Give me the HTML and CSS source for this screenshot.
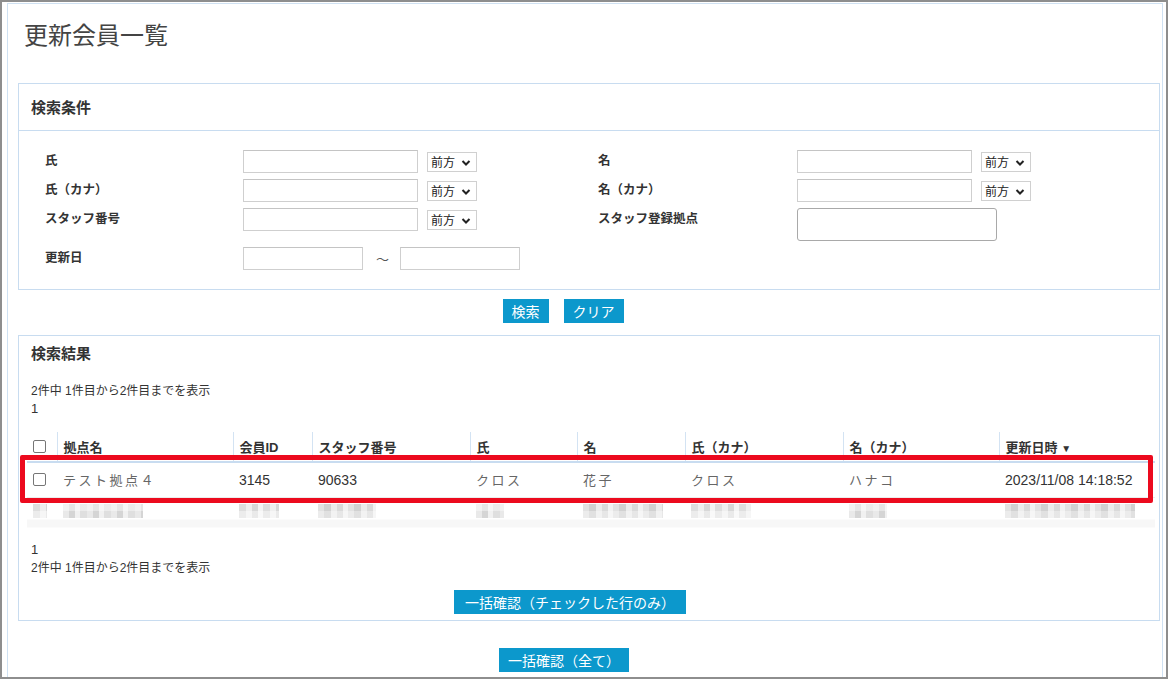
FILE: index.html
```html
<!DOCTYPE html>
<html lang="ja">
<head>
<meta charset="utf-8">
<title>更新会員一覧</title>
<link rel="stylesheet" href="styles.css">
</head>
<body>
<div class="window">
  <div class="page">
    <h1 class="title">更新会員一覧</h1>

    <section class="panel search">
      <div class="panel-head">検索条件</div>
      <div class="form">
        <div class="label">氏</div>
        <div class="field">
          <input class="text" type="text">
          <div class="select"><select><option>前方</option></select><svg viewBox="0 0 10 8" class="chev"><path d="M1.5 2 5 5.5 8.5 2" fill="none" stroke="#222" stroke-width="2"/></svg></div>
        </div>
        <div class="label">名</div>
        <div class="field">
          <input class="text" type="text">
          <div class="select"><select><option>前方</option></select><svg viewBox="0 0 10 8" class="chev"><path d="M1.5 2 5 5.5 8.5 2" fill="none" stroke="#222" stroke-width="2"/></svg></div>
        </div>

        <div class="label">氏（カナ）</div>
        <div class="field">
          <input class="text" type="text">
          <div class="select"><select><option>前方</option></select><svg viewBox="0 0 10 8" class="chev"><path d="M1.5 2 5 5.5 8.5 2" fill="none" stroke="#222" stroke-width="2"/></svg></div>
        </div>
        <div class="label">名（カナ）</div>
        <div class="field">
          <input class="text" type="text">
          <div class="select"><select><option>前方</option></select><svg viewBox="0 0 10 8" class="chev"><path d="M1.5 2 5 5.5 8.5 2" fill="none" stroke="#222" stroke-width="2"/></svg></div>
        </div>

        <div class="label">スタッフ番号</div>
        <div class="field">
          <input class="text" type="text">
          <div class="select"><select><option>前方</option></select><svg viewBox="0 0 10 8" class="chev"><path d="M1.5 2 5 5.5 8.5 2" fill="none" stroke="#222" stroke-width="2"/></svg></div>
        </div>
        <div class="label">スタッフ登録拠点</div>
        <div class="field">
          <input class="text tall" type="text">
        </div>

        <div class="label">更新日</div>
        <div class="field">
          <input class="text date" type="text">
          <span class="tilde">〜</span>
          <input class="text date" type="text">
        </div>
      </div>
    </section>

    <div class="btn-row search-btns">
      <button class="btn btn-short">検索</button>
      <button class="btn">クリア</button>
    </div>

    <section class="panel results">
      <div class="results-head">検索結果</div>
      <p class="info">2件中 1件目から2件目までを表示</p>
      <p class="info num">1</p>

      <div class="table-wrap">
        <table class="list">
          <colgroup>
            <col style="width:30px"><col style="width:176px"><col style="width:79px"><col style="width:158px"><col style="width:107px"><col style="width:108px"><col style="width:158px"><col style="width:156px"><col style="width:156px">
          </colgroup>
          <thead>
            <tr>
              <th class="chk"><span class="box"></span></th>
              <th>拠点名</th>
              <th>会員ID</th>
              <th>スタッフ番号</th>
              <th>氏</th>
              <th>名</th>
              <th>氏（カナ）</th>
              <th>名（カナ）</th>
              <th>更新日時 <span class="sort">▼</span></th>
            </tr>
          </thead>
          <tbody>
            <tr class="row">
              <td class="chk"><span class="box"></span></td>
              <td class="kana">テスト拠点４</td>
              <td class="num-cell">3145</td>
              <td class="num-cell">90633</td>
              <td class="kana">クロス</td>
              <td class="kana">花子</td>
              <td class="kana">クロス</td>
              <td class="kana">ハナコ</td>
              <td class="num-cell">2023/11/08 14:18:52</td>
            </tr>
            <tr class="row masked">
              <td class="chk"><span class="blk b1" style="width:14px"></span></td>
              <td><span class="blk b2" style="width:80px"></span></td>
              <td><span class="blk b1" style="width:40px"></span></td>
              <td><span class="blk b3" style="width:58px"></span></td>
              <td><span class="blk b2" style="width:28px"></span></td>
              <td><span class="blk b3" style="width:80px"></span></td>
              <td><span class="blk b1" style="width:60px"></span></td>
              <td><span class="blk b2" style="width:38px"></span></td>
              <td><span class="blk b3" style="width:130px"></span></td>
            </tr>
          </tbody>
        </table>
        <div class="highlight"></div>
      </div>

      <p class="info num foot-num">1</p>
      <p class="info">2件中 1件目から2件目までを表示</p>

      <div class="btn-row inner-btns">
        <button class="btn btn-wide">一括確認（チェックした行のみ）</button>
      </div>
    </section>

    <div class="btn-row all-btns">
      <button class="btn">一括確認（全て）</button>
    </div>
  </div>
</div>
</body>
</html>
```

FILE: styles.css
```css
* { box-sizing: border-box; }

html, body {
  margin: 0;
  padding: 0;
  background: #fff;
}

body {
  font-family: "Liberation Sans", "Noto Sans CJK JP", sans-serif;
  font-size: 13px;
  color: #333;
}

.window {
  width: 1168px;
  height: 679px;
  border: 2px solid #8e8e8e;
  overflow: hidden;
  background: #fff;
}

.page {
  margin: 1px 3px 0 5px;
  height: 100%;
  border: 1px solid #cfe1f2;
  border-bottom: none;
}

.title {
  margin: 15px 0 30px 16px;
  font-size: 24px;
  line-height: 34px;
  font-weight: normal;
  color: #444;
}

/* panels */
.panel {
  margin: 0 2px 0 10px;
  border: 1px solid #c8dcf0;
  background: #fff;
}

.panel-head {
  height: 47px;
  line-height: 47px;
  padding-left: 12px;
  font-size: 15px;
  font-weight: bold;
  color: #333;
  border-bottom: 1px solid #c8dcf0;
}

/* search form */
.form {
  display: grid;
  grid-template-columns: 198px 355px 199px 1fr;
  row-gap: 6px;
  align-items: start;
  padding: 19px 0 19px 26px;
}

.label {
  line-height: 23px;
  font-weight: bold;
  font-size: 12.5px;
  color: #333;
}

.field {
  display: flex;
  align-items: center;
  height: 23px;
}

.text {
  width: 175px;
  height: 23px;
  border: 1px solid #cfcfcf;
  border-top-color: #c4c4c4;
  padding: 0 4px;
  margin: 0;
  font: inherit;
  background: #fff;
  outline: none;
}

.text.tall {
  width: 200px;
  height: 33px;
  border: 1px solid #a9a9a9;
  border-radius: 3px;
  align-self: flex-start;
}

.field:has(.tall) { height: 33px; }

.text.date { width: 120px; }

.tilde {
  width: 12px;
  margin: 0 12px 0 13px;
  text-align: center;
  font-size: 13px;
  color: #555;
}

.select {
  position: relative;
  margin-left: 9px;
  width: 50px;
  height: 20px;
}

.select select {
  appearance: none;
  -webkit-appearance: none;
  width: 50px;
  height: 20px;
  border: 1px solid #d0d0d0;
  background: #fff;
  padding: 0 0 0 3px;
  font-family: "Noto Sans CJK JP", sans-serif;
  font-size: 12px;
  color: #222;
  outline: none;
  border-radius: 0;
}

.chev {
  position: absolute;
  right: 6px;
  top: 7px;
  width: 10px;
  height: 8px;
  pointer-events: none;
}

/* buttons */
.btn-row {
  display: flex;
  justify-content: center;
  gap: 15px;
}

.btn {
  height: 24px;
  padding: 0 9px;
  border: none;
  background: #0c98cc;
  color: #fff;
  font-family: "Noto Sans CJK JP", sans-serif;
  font-size: 14px;
  line-height: 24px;
  cursor: pointer;
}

.btn-wide { padding: 0 11px; }

.search-btns {
  margin-top: 9px;
  padding-right: 44px;
}

/* results */
.results {
  margin-top: 12px;
  padding: 0 3px 6px 8px;
}

.results-head {
  padding: 8px 0 0 4px;
  line-height: 20px;
  font-size: 15px;
  font-weight: bold;
}

.info {
  margin: 0;
  padding-left: 4px;
  line-height: 18px;
  font-size: 12px;
  color: #333;
}

.results-head + .info { margin-top: 18px; }

.info.num { font-size: 13px; }

.table-wrap {
  position: relative;
  margin-top: 14px;
}

.list {
  width: 1128px;
  border-collapse: collapse;
  table-layout: fixed;
}

.list th {
  height: 30px;
  padding: 0 6px;
  text-align: left;
  font-weight: bold;
  font-size: 13px;
  color: #333;
  border-left: 1px solid #d3e3f3;
  border-bottom: 2px solid #c8dcf0;
  white-space: nowrap;
}

.list th:first-child { border-left: none; }

.sort { font-size: 10px; }

.list td {
  padding: 0 6px;
  white-space: nowrap;
  overflow: hidden;
}

.list .chk { padding: 0 0 0 6px; }

.box {
  display: block;
  width: 13px;
  height: 13px;
  border: 1px solid #767676;
  border-radius: 2px;
  background: #fff;
}

.row td {
  height: 35px;
  border-bottom: 1px solid #ececec;
}

.kana {
  color: #666;
  letter-spacing: 2.5px;
}

.num-cell {
  color: #333;
  font-size: 14px;
}

.row.masked td {
  height: 31px;
  vertical-align: top;
  padding-top: 6px;
  border-bottom: none;
  background: linear-gradient(#fff 0 22px, #f7f7f7 22px);
}

/* pixelated redaction */
.blk {
  display: block;
  height: 14px;
  opacity: 0.8;
}

.b1 {
  background:
    linear-gradient(#0000 0 7px, rgba(255,255,255,.45) 7px),
    repeating-linear-gradient(90deg, #d6d6d6 0 7px, #ececec 7px 13px, #cfcfcf 13px 19px, #f2f2f2 19px 24px);
}

.b2 {
  background:
    linear-gradient(rgba(255,255,255,.4) 0 7px, #0000 7px),
    repeating-linear-gradient(90deg, #e4e4e4 0 6px, #cbcbcb 6px 12px, #eeeeee 12px 17px, #d8d8d8 17px 24px);
}

.b3 {
  background:
    linear-gradient(#0000 0 7px, rgba(255,255,255,.35) 7px),
    repeating-linear-gradient(90deg, #dcdcdc 0 6px, #c6c6c6 6px 13px, #e8e8e8 13px 19px, #d2d2d2 19px 25px, #efefef 25px 30px);
}

.highlight {
  position: absolute;
  left: -7px;
  top: 23px;
  width: 1133px;
  height: 48px;
  border: 5px solid #ec0a1e;
  border-radius: 2px;
  pointer-events: none;
}

.foot-num { margin-top: 13px; }

.inner-btns {
  margin-top: 13px;
  padding-right: 43px;
}

.all-btns {
  margin-top: 27px;
  padding-right: 42px;
}
```
